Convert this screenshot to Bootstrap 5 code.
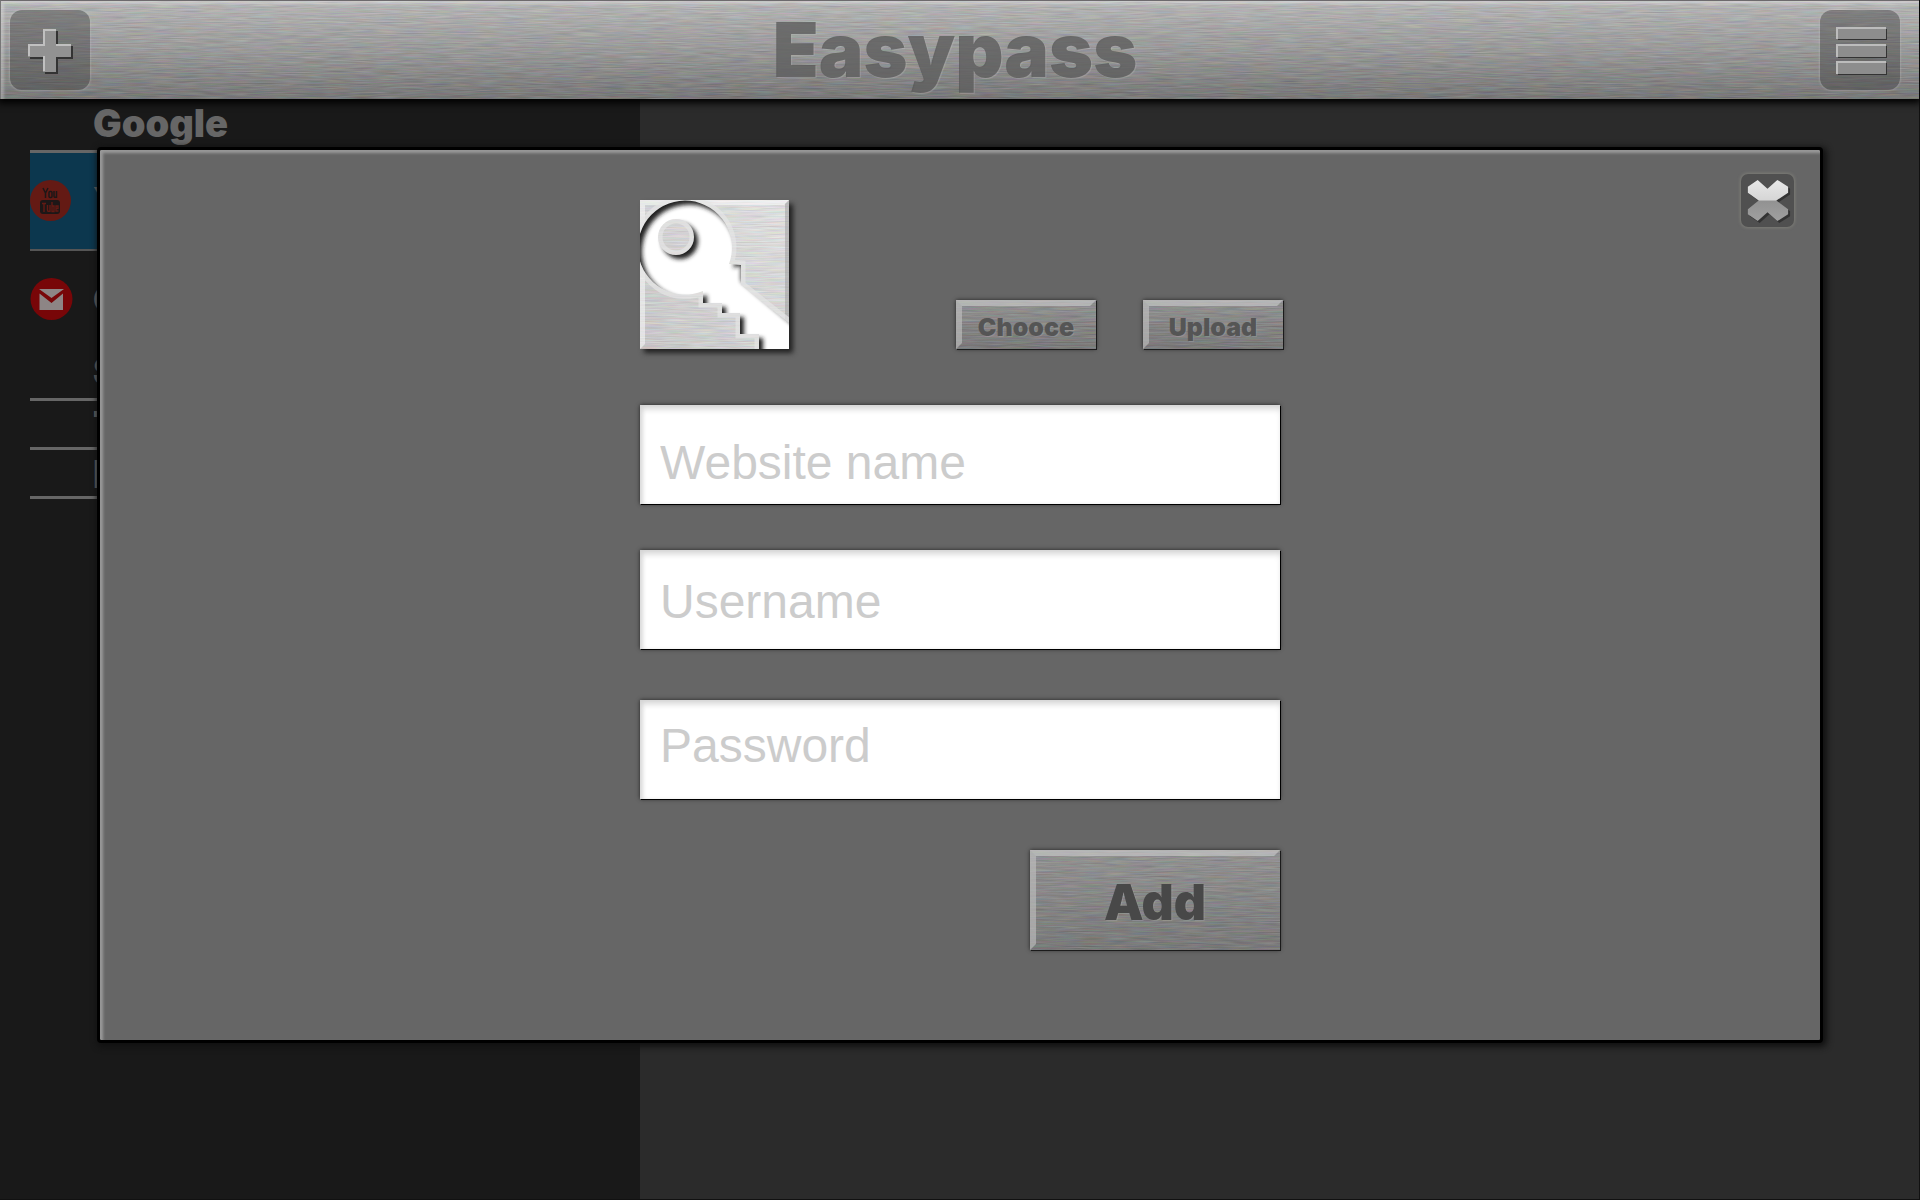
<!DOCTYPE html>
<html lang="en">
<head>
<meta charset="utf-8">
<meta name="viewport" content="width=device-width, initial-scale=1">
<title>Easypass</title>
<link href="https://cdn.jsdelivr.net/npm/bootstrap@5.3.0/dist/css/bootstrap.min.css" rel="stylesheet">
<style>
body { background: #2b2b2b; font-family: "Liberation Sans", Arial, sans-serif; }
.heavy { font-family: Inter, "Liberation Sans", sans-serif; font-weight: 900; }
.shell { border-right: 1px solid #111; border-bottom: 1px solid #111; }

/* brushed metal: a gradient layer with streaks, under the content */
.metal { position: relative; isolation: isolate; border: 0; }
.metal::before { content: ""; position: absolute; inset: 0; z-index: -1; filter: url(#brushed); border-radius: inherit; }

.topbar { height: 99px; padding: 9px 19px 9px 9px; border-top: 1px solid #6d6a6d; border-left: 1px solid #777; box-shadow: 0 2px 7px 2px #000; z-index: 2; }
.topbar::before { background: linear-gradient(#b5b5b5, #999 50%, #777); }
.topbar::after { content: ""; position: absolute; inset: 0; z-index: -1; box-shadow: inset 3px 3px 3px rgba(255,255,255,.28); }
.brand { font-size: 75px; line-height: 80px; color: rgba(82,82,82,.72); text-shadow: 1px 1px 1px rgba(200,200,200,.3); }
.tool-btn { width: 80px; height: 80px; padding: 0; border: 0; border-radius: 12px; background: rgba(60,60,60,.42); box-shadow: 0 0 2px 1px rgba(200,200,200,.3); }
.tool-btn svg, .close-btn svg, .key-art { display: block; }

.sidebar { width: 33.35%; background: #191919; padding-left: 30px; color: #666; font-size: 38px; }
.site { height: 49px; padding-left: 63px; line-height: 48px; border-bottom: 3px solid #666; }
.site-first { height: 54px; }
.site-open { height: 98px; background: #0c374e; border-bottom: 2px solid #555; }
.site-plain { height: 96px; }
.site-icon { width: 63px; }

.panel { top: 147px; left: 97px; right: 96px; padding: 50px 0 90px; background: #666; border: 3px solid #000; border-radius: 4px; box-shadow: inset 3px 3px 3px #999, 2px 2px 6px 2px #111; z-index: 3; }
.close-btn { top: 24px; right: 26px; width: 53px; height: 53px; padding: 0; border: 0; border-radius: 7px; background: #505050; box-shadow: 0 0 3px 1px #7c7c76; }
.entry { max-width: 640px; }
.key-row { margin-bottom: 56px; margin-right: -3px; }
.key-art { box-shadow: 4px 4px 5px #222; }
.pick { gap: 47px; }
.metal-btn { color: #555; text-shadow: 1px 1px 0 rgba(190,190,190,.25); box-shadow: 0 0 4px #222, 1px 1px 0 #181818; padding: 4px 0 0; }
.metal-btn::before { background: linear-gradient(#929292, #797979); }
.metal-btn::after { content: ""; position: absolute; inset: 0; z-index: -1; border: 0 solid transparent; border-width: 6px 0 0 6px; border-top-color: rgba(205,205,205,.6); border-left-color: rgba(195,195,195,.6); clip-path: polygon(0 0, 100% 0, calc(100% - 6px) 6px, 6px 6px, 6px calc(100% - 6px), 0 100%); }
.small-btn { width: 140px; height: 49px; font-size: 25px; line-height: 40px; }
.add-btn { width: 250px; height: 100px; font-size: 50px; color: #484848; }
.field { height: 99px; padding: 0 20px; font-size: 48px; border: 0; border-radius: 0; background: #fff; box-shadow: inset 0 6px 6px -2px #d4d4d4, inset 4px 0 4px -1px #ddd, 1px 1px 0 #000, 0 0 4px #222; }
.field:focus { box-shadow: inset 0 4px 6px #ccc, 0 0 0 3px #9ab; }
.field::placeholder { color: #ccc; opacity: 1; }
.field { margin-bottom: 51px; }
.field:first-child { margin-bottom: 46px; }
</style>
<script src="https://cdn.jsdelivr.net/npm/bootstrap@5.3.0/dist/js/bootstrap.bundle.min.js"></script>
</head>
<body>
<svg class="position-absolute" width="0" height="0" aria-hidden="true">
  <filter id="brushed" x="0" y="0" width="100%" height="100%" color-interpolation-filters="sRGB">
    <feTurbulence type="fractalNoise" baseFrequency="0.04 0.8" numOctaves="2" seed="4"/>
    <feColorMatrix values=".7 .2 .1 0 0  .15 .7 .15 0 0  .1 .2 .7 0 0  0 0 0 0 1" result="n"/>
    <feComposite in="SourceGraphic" in2="n" operator="arithmetic" k2="1" k3=".24" k4="-.12"/>
  </filter>
</svg>

<div class="shell min-vh-100 d-flex flex-column position-relative">
  <header class="topbar metal d-flex align-items-start justify-content-between">
    <button class="tool-btn" type="button" aria-label="Add entry">
      <svg width="80" height="80" viewBox="0 0 80 80">
        <path d="M35 21h13v15h15v13H48v15H35V49H20V36h15z" fill="#333"/>
        <path d="M33 19h13v15h15v13H46v15H33V47H18V34h15z" fill="#929292"/>
        <path d="M34 61V46M19 46V35h15V20h12M46 35h15" fill="none" stroke="#c0c0c0" stroke-width="2"/>
      </svg>
    </button>
    <h1 class="brand heavy m-0">Easypass</h1>
    <button class="tool-btn" type="button" aria-label="Menu">
      <svg width="80" height="80" viewBox="0 0 80 80">
        <path d="M18 19h49v11H18zM18 36h49v12H18zM18 53h49v12H18z" fill="#333"/>
        <path d="M16 17h50v12H16zM16 34h50v13H16zM16 51h50v13H16z" fill="#8d8d8d"/>
        <path d="M17 29V18h49M17 47V35h49M17 64V52h49" fill="none" stroke="#bcbcbc" stroke-width="2"/>
      </svg>
    </button>
  </header>

  <div class="d-flex flex-grow-1">
    <nav class="sidebar heavy" aria-label="Sites">
      <div class="site site-first">Google</div>
      <div class="site site-open d-flex align-items-center p-0">
        <svg class="site-icon" height="42" viewBox="0 0 63 42">
          <circle cx="20.500" cy="20.500" r="20.500" fill="#641a14"/>
          <rect x="10" y="20" width="20" height="14" rx="3" fill="#1d1717"/>
          <g fill="none" stroke="#1d1717" stroke-width="1.500">
            <path d="M13 8l2.500 5L18 8M15.500 13v5"/><rect x="19" y="11.500" width="3" height="6" rx="1"/><path d="M24 11v5q0 2 2.500 1V11v7"/>
          </g>
          <g fill="none" stroke="#641a14" stroke-width="1.400">
            <path d="M12 23.500h4M14 23.500V32M17.500 25v5q0 2 2.500 1V25v7M22 22v9.500h2V26h-2M28.500 31H26v-5h2v2.500h-2"/>
          </g>
        </svg>
        <span>Y</span>
      </div>
      <div class="site-plain d-flex align-items-center">
        <svg class="site-icon" height="42" viewBox="0 0 63 42">
          <circle cx="21.500" cy="21" r="21" fill="#780608"/>
          <path d="M9 11h25L21.500 20zM9.500 15.500L21.500 25 33 15.500V32H9.500z" fill="#8d8585"/>
        </svg>
        <span>G</span>
      </div>
      <div class="site site-first">S</div>
      <div class="site site-row">T</div>
      <div class="site site-row">F</div>
    </nav>
    <main class="flex-grow-1"></main>
  </div>

  <section class="panel position-absolute" role="dialog" aria-label="Add website">
    <button class="close-btn position-absolute" type="button" aria-label="Close">
      <svg width="53" height="53" viewBox="0 0 54 54">
        <defs><linearGradient id="xg" x2="0" y2="1"><stop offset="0" stop-color="#e8e8e8"/><stop offset=".48" stop-color="#d6d6d6"/><stop offset=".52" stop-color="#929292"/><stop offset="1" stop-color="#a0a0a0"/></linearGradient></defs>
        <path transform="translate(2 2)" fill="#333" d="M17 6l10 9 10-9 11 7v6l-12 8 12 9v5l-11 7-10-9-10 9-10-7v-5l11-9-11-8v-6z"/>
        <path fill="url(#xg)" d="M17 6l10 9 10-9 11 7v6l-12 8 12 9v5l-11 7-10-9-10 9-10-7v-5l11-9-11-8v-6z"/>
      </svg>
    </button>

    <form class="entry mx-auto">
      <div class="key-row d-flex align-items-end justify-content-between">
        <svg class="key-art" width="149" height="149" viewBox="0 0 149 149" role="img" aria-label="Key">
          <defs>
            <path id="key" clip-rule="evenodd" fill-rule="evenodd" d="M89 64L101 65V85L149 123V149H119V134H100V113H82V103H63V91A47 47 0 1 1 89 64ZM54 37A18 18 0 1 0 18 37A18 18 0 1 0 54 37Z"/>
            <clipPath id="inKey"><use href="#key" clip-rule="evenodd"/></clipPath>
            <filter id="soft" x="-20%" y="-20%" width="140%" height="140%"><feGaussianBlur stdDeviation="2"/></filter>
            <linearGradient id="plate" x1="0" y1="1" x2="1" y2="0"><stop offset="0" stop-color="#c6c6c6"/><stop offset="1" stop-color="#dedede"/></linearGradient>
          </defs>
          <rect width="149" height="149" fill="url(#plate)" filter="url(#brushed)"/>
          <path d="M0 0h149l-5 5H5v139l-5 5z" fill="#fff" opacity=".5"/>
          <path d="M149 0v149l-4-4V4z" fill="#888" opacity=".4"/>
          <use href="#key" fill="none" stroke="#e6e6e6" stroke-width="9" opacity=".7"/>
          <use href="#key" fill="#fff"/>
          <g clip-path="url(#inKey)">
            <path filter="url(#soft)" transform="translate(4 4)" fill="#222" fill-rule="evenodd" d="M-20-20H165V165H-20ZM89 64L97 61V77L160 130V165H119V134H100V113H82V103H63V91A47 47 0 1 1 89 64ZM54 37A18 18 0 1 0 18 37A18 18 0 1 0 54 37Z"/>
          </g>
        </svg>
        <div class="pick d-flex">
          <button class="metal metal-btn small-btn heavy" type="button">Chooce</button>
          <button class="metal metal-btn small-btn heavy" type="button">Upload</button>
        </div>
      </div>
      <div class="d-flex flex-column">
        <input class="form-control field pt-3" type="text" placeholder="Website name" aria-label="Website name">
        <input class="form-control field pt-1" type="text" placeholder="Username" aria-label="Username">
        <input class="form-control field pb-2" type="password" placeholder="Password" aria-label="Password">
        <button class="metal metal-btn add-btn heavy align-self-end" type="submit">Add</button>
      </div>
    </form>
  </section>
</div>
</body>
</html>
